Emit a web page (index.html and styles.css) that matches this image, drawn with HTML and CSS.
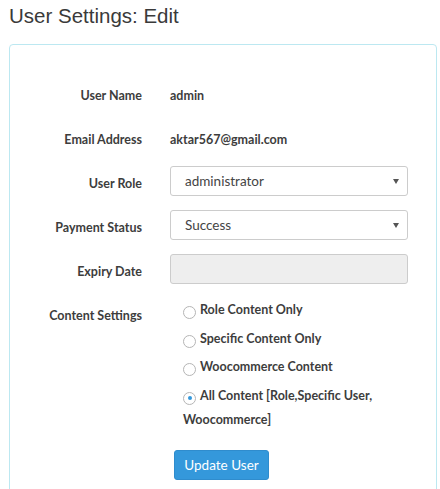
FILE: index.html
```html
<!DOCTYPE html>
<html>
<head>
<meta charset="utf-8">
<link rel="stylesheet" href="styles.css">
</head>
<body>
<h1 class="title">User Settings: Edit</h1>
<div class="panel">
  <form class="form">
    <div class="label">User Name</div>
    <div class="static">admin</div>

    <div class="label">Email Address</div>
    <div class="static">aktar567@gmail.com</div>

    <div class="label">User Role</div>
    <div class="select"><span>administrator</span><span class="arrow"></span></div>

    <div class="label">Payment Status</div>
    <div class="select"><span>Success</span><span class="arrow"></span></div>

    <div class="label">Expiry Date</div>
    <div class="input disabled"></div>

    <div class="label">Content Settings</div>
    <div class="radios">
      <div class="radio"><span class="dot"></span>Role Content Only</div>
      <div class="radio"><span class="dot"></span>Specific Content Only</div>
      <div class="radio"><span class="dot"></span>Woocommerce Content</div>
      <div class="radio"><span class="dot checked"></span>All Content [Role,Specific User, Woocommerce]</div>
    </div>

    <div></div>
    <div class="actions"><button type="button" class="btn">Update User</button></div>
  </form>
</div>
</body>
</html>
```
FILE: styles.css
```css
html, body {
  margin: 0;
  padding: 0;
  background: #fff;
}
body {
  padding: 0 3px 0 9px;
  font-family: "Lato", "Open Sans", sans-serif;
  color: #444;
}
.title {
  margin: 0;
  padding-top: 4px;
  height: 40px;
  font-family: "Liberation Sans", Arial, sans-serif;
  font-weight: normal;
  font-size: 20.5px;
  line-height: 24px;
  color: #3a3a3a;
}
.panel {
  border: 1px solid #bce8f1;
  border-radius: 4px;
  height: 460px;
  box-sizing: border-box;
  padding: 33px 28px 0 0;
}
.form {
  display: grid;
  grid-template-columns: 132px 1fr;
  column-gap: 28px;
  row-gap: 14px;
  font-size: 12.5px;
  font-weight: bold;
}
.label {
  text-align: right;
  padding-top: 8px;
  line-height: 20px;
  color: #3d3d3d;
}
.static {
  padding-top: 8px;
  line-height: 20px;
  height: 22px;
  color: #3d3d3d;
}
.select, .input {
  height: 30px;
  box-sizing: border-box;
  border: 1px solid #ccc;
  border-radius: 3px;
  display: flex;
  align-items: center;
  justify-content: space-between;
  padding: 0 8px 0 14px;
  font-weight: normal;
  font-size: 13.5px;
  color: #444;
}
.arrow {
  width: 0;
  height: 0;
  border-left: 3px solid transparent;
  border-right: 3px solid transparent;
  border-top: 5px solid #555;
}
.input.disabled {
  background: #eee;
}
.radios {
  padding: 0 0 0 13px;
  line-height: 24px;
  color: #3d3d3d;
}
.radio {
  margin-bottom: 4.5px;
}
.radio:last-child {
  margin-bottom: 0;
}
.dot {
  display: inline-block;
  width: 13px;
  height: 13px;
  border: 1px solid #b5b5b5;
  border-radius: 50%;
  vertical-align: -5px;
  margin-right: 4px;
  position: relative;
  box-sizing: border-box;
  background: #fff;
}
.dot.checked::after {
  content: "";
  position: absolute;
  left: 3.5px;
  top: 3.5px;
  width: 4px;
  height: 4px;
  border-radius: 50%;
  background: #3498db;
}
.actions {
  padding: 4px 0 0 4px;
}
.btn {
  width: 95px;
  height: 30px;
  border: 1px solid #2f8ccd;
  border-radius: 3px;
  background: #3498db;
  color: #fff;
  font-family: "Lato", "Open Sans", sans-serif;
  font-size: 13.5px;
  padding: 0;
}
```
